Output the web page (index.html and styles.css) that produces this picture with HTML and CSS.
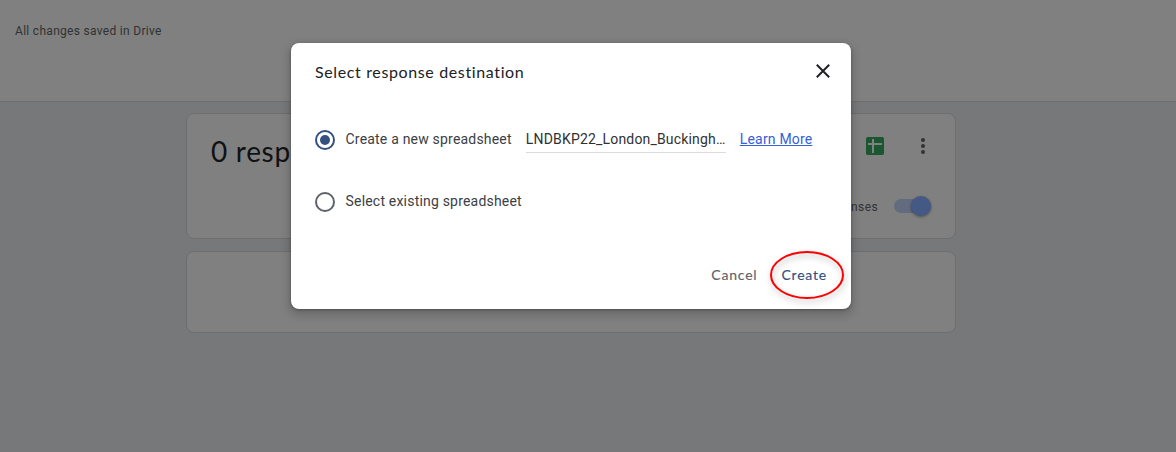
FILE: index.html
```html
<!DOCTYPE html>
<html lang="en">
<head>
<meta charset="utf-8">
<title>Select response destination</title>
<link rel="stylesheet" href="styles.css">
</head>
<body>
<div class="page">
  <header class="topbar"><span class="save-status">All changes saved in Drive</span></header>
  <main class="content">
    <section class="card summary">
      <div class="summary-head">
        <h1 class="count">0 responses</h1>
        <div class="tools">
          <svg class="sheets" width="18" height="18" viewBox="0 0 18 18"><rect width="18" height="18" rx="1.8" fill="#1a562f"/><path d="M2 7H16M7 2V16" stroke="#808080" stroke-width="2" fill="none"/></svg>
          <svg class="more" width="4" height="16" viewBox="0 0 4 16" fill="#303234"><circle cx="2" cy="2" r="2"/><circle cx="2" cy="8" r="2"/><circle cx="2" cy="14" r="2"/></svg>
        </div>
      </div>
      <div class="accepting">
        <span class="accepting-label">Accepting responses</span>
        <span class="switch"><span class="knob"></span></span>
      </div>
    </section>
    <section class="card empty"></section>
  </main>
</div>
<div class="overlay">
  <div class="dialog" role="dialog">
    <div class="dialog-head">
      <h2 class="title">Select response destination</h2>
      <svg class="close" width="14" height="14" viewBox="0 0 14 14"><path d="M.8 .8L13.2 13.2M13.2 .8L.8 13.2" stroke="#202124" stroke-width="2" fill="none"/></svg>
    </div>
    <div class="option first">
      <span class="radio checked"></span>
      <span class="option-label">Create a new spreadsheet</span>
      <span class="sheet-name">LNDBKP22_London_Buckingh…</span>
      <a class="learn" href="#">Learn More</a>
    </div>
    <div class="option second">
      <span class="radio"></span>
      <span class="option-label">Select existing spreadsheet</span>
    </div>
    <div class="actions">
      <span class="action cancel">Cancel</span>
      <span class="action create">Create
        <svg class="highlight" width="84" height="62" viewBox="0 0 84 62"><ellipse cx="42" cy="29" rx="36" ry="23" fill="none" stroke="#f00" stroke-width="2"/></svg>
      </span>
    </div>
  </div>
</div>
</body>
</html>
```
FILE: styles.css
```css
* { box-sizing: border-box; }
body { margin: 0; font-family: Roboto, "Liberation Sans", sans-serif; overflow: hidden; }
h1, h2 { margin: 0; font-weight: 400; }
svg { display: block; }
.page { height: 452px; background: #77787a; }
.topbar { height: 102px; padding: 23px 15px; background: #808080; border-bottom: 1px solid #6d6e70; }
.save-status { display: block; font-size: 12px; line-height: 16px; letter-spacing: .3px; color: #303234; }
.content { width: 770px; margin-left: 186px; padding-top: 11px; display: flex; flex-direction: column; gap: 12px; }
.card { background: #808080; border: 1px solid #6d6e70; border-radius: 8px; }
.summary { height: 126px; padding: 20px 24px 0; }
.summary-head { display: flex; justify-content: space-between; align-items: flex-start; }
.count { margin-top: -1px; height: 37px; font-family: Lato, sans-serif; font-size: 28px; line-height: 36px; letter-spacing: .7px; color: #101112; }
.tools { display: flex; align-items: center; gap: 37px; padding: 3px 6px 0 0; }
.accepting { display: flex; justify-content: flex-end; align-items: center; gap: 16px; margin-top: 26px; height: 20px; }
.accepting-label { padding-top: 1px; font-size: 12px; letter-spacing: .4px; color: #303234; }
.switch { display: flex; justify-content: flex-end; align-items: center; width: 37px; height: 14px; border-radius: 7px; background: #626c7e; }
.knob { width: 20px; height: 20px; border-radius: 50%; background: #455985; box-shadow: 0 1px 3px rgba(0,0,0,.4); }
.empty { height: 82px; }
.overlay { position: absolute; inset: 0; padding-top: 43px; }
.dialog { width: 560px; height: 266px; margin-left: 291px; padding: 0 24px; background: #fff; border-radius: 8px; box-shadow: 0 1px 3px rgba(0,0,0,.3), 0 4px 8px 3px rgba(0,0,0,.15); }
.dialog-head { display: flex; justify-content: space-between; align-items: flex-start; padding-top: 17px; height: 84px; }
.title { font-family: Lato, sans-serif; font-size: 16px; line-height: 24px; letter-spacing: .63px; color: #202124; }
.close { margin: 4px -3px 0 0; }
.option { display: flex; align-items: center; height: 26px; font-size: 14px; letter-spacing: .2px; color: #303134; }
.second { margin-top: 36px; }
.radio { display: flex; width: 20px; height: 20px; border: 2px solid #5f6368; border-radius: 50%; margin-right: 10.5px; }
.radio.checked { border-color: #34507f; }
.radio.checked::after { content: ""; width: 10px; height: 10px; margin: 3px; border-radius: 50%; background: #34507f; }
.option-label { line-height: 20px; padding-bottom: 2px; color: #3c4043; }
.sheet-name { width: 200px; height: 26px; line-height: 24px; margin-left: 14px; border-bottom: 1px solid #dadce0; white-space: nowrap; letter-spacing: .18px; }
.learn { color: #3460d8; margin-left: 14px; padding-bottom: 2px; letter-spacing: .18px; }
.actions { display: flex; justify-content: flex-end; gap: 24px; padding-top: 48px; font-family: Lato, sans-serif; font-size: 14px; line-height: 24px; letter-spacing: .8px; }
.cancel { color: #5f6368; -webkit-text-stroke: .15px #5f6368; }
.create { position: relative; color: #34507f; -webkit-text-stroke: .15px #34507f; }
.highlight { position: absolute; left: -16px; top: -17px; overflow: visible; filter: drop-shadow(1px 3px 3px rgba(0,0,0,.3)); }
```
